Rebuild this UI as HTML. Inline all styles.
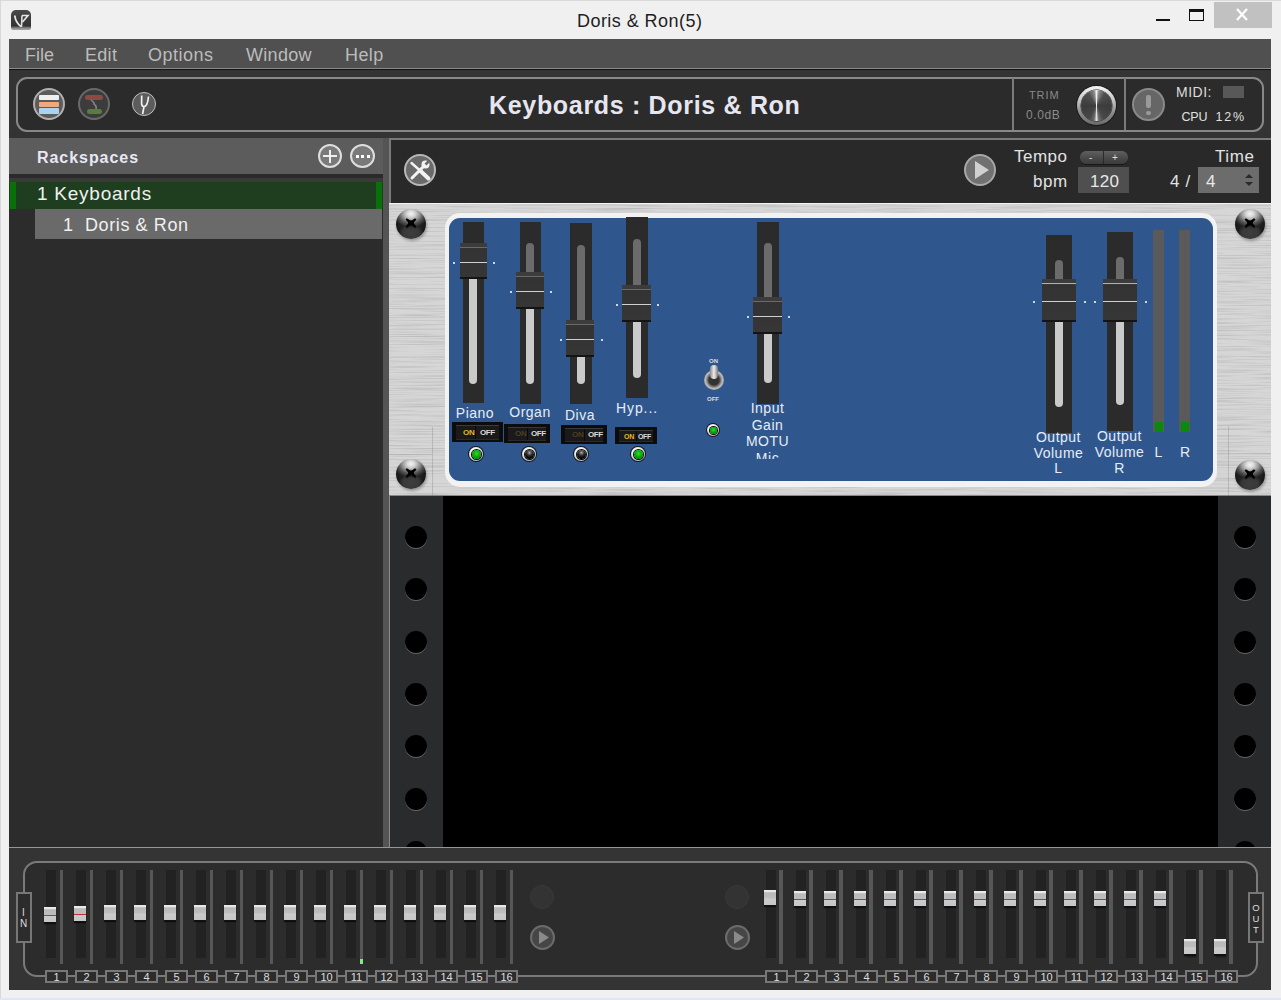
<!DOCTYPE html>
<html><head><meta charset="utf-8"><style>
*{margin:0;padding:0;box-sizing:border-box}
html,body{width:1281px;height:1000px;overflow:hidden;background:#f0f0f0;font-family:"Liberation Sans",sans-serif}
div,span,svg{position:absolute}
.t{white-space:pre;line-height:1}
</style></head><body>
<div style="left:0px;top:0px;width:1281px;height:1px;background:#dadada"></div>
<div style="left:0px;top:0px;width:1px;height:1000px;background:#d8d8d8"></div>
<span class="t" style="left:577px;top:12px;font-size:18px;color:#1e1e1e;font-weight:400;letter-spacing:0.45px">Doris &amp; Ron(5)</span>
<div style="left:11px;top:10px;width:20px;height:20px;border-radius:5px 5px 2px 2px;background:linear-gradient(#4a4a4a,#333 80%,#888 90%,#aaa);"></div>
<svg style="left:11px;top:10px" width="20" height="20" viewBox="0 0 20 20"><path d="M3.8 5.5 Q4.5 12.5 10 16.5" stroke="#e8e8e8" stroke-width="1.8" fill="none"/><path d="M11 5.5 L10.5 17" stroke="#e0e0e0" stroke-width="1.6"/><path d="M11 5.5 L17 5.5 L11.5 12" stroke="#e8e8e8" stroke-width="1.6" fill="none"/></svg>
<div style="left:1156px;top:19px;width:14px;height:2px;background:#111"></div>
<div style="left:1189px;top:9px;width:15px;height:12px;border:1px solid #111;border-top:3px solid #111"></div>
<div style="left:1214px;top:2px;width:58px;height:26px;background:#c1c1c1"></div>
<svg style="left:1235px;top:8px" width="14" height="13" viewBox="0 0 14 13"><path d="M2 1 L12 12 M12 1 L2 12" stroke="#fff" stroke-width="2.2"/></svg>
<div style="left:9px;top:39px;width:1262px;height:29px;background:#505050"></div>
<div style="left:9px;top:68px;width:1262px;height:1px;background:#8a8a8a"></div>
<div style="left:9px;top:69px;width:1262px;height:1px;background:#141414"></div>
<span class="t" style="left:25px;top:46px;font-size:18px;color:#bcbcbc;font-weight:400;letter-spacing:0px">File</span>
<span class="t" style="left:85px;top:46px;font-size:18px;color:#bcbcbc;font-weight:400;letter-spacing:0.3px">Edit</span>
<span class="t" style="left:148px;top:46px;font-size:18px;color:#bcbcbc;font-weight:400;letter-spacing:0.5px">Options</span>
<span class="t" style="left:246px;top:46px;font-size:18px;color:#bcbcbc;font-weight:400;letter-spacing:0.3px">Window</span>
<span class="t" style="left:345px;top:46px;font-size:18px;color:#bcbcbc;font-weight:400;letter-spacing:0.4px">Help</span>
<div style="left:9px;top:70px;width:1262px;height:68px;background:#343434"></div>
<div style="left:16px;top:77px;width:1248px;height:55px;border:2px solid #888;border-radius:11px;background:#2b2b2b"></div>
<div style="left:1012px;top:78px;width:2px;height:52px;background:#7a7a7a"></div>
<div style="left:1124px;top:78px;width:2px;height:52px;background:#7a7a7a"></div>
<div style="left:9px;top:132px;width:1262px;height:6px;background:#333"></div>
<span class="t" style="left:489px;top:93px;font-size:25px;color:#e6e6f0;font-weight:700;letter-spacing:0.68px">Keyboards : Doris &amp; Ron</span>
<div style="left:33px;top:88px;width:32px;height:32px;border-radius:50%;background:#5c5c5c;border:2px solid #b0b0b0"></div>
<div style="left:39px;top:95px;width:20px;height:5px;background:#eeeeee;border-radius:1px"></div>
<div style="left:39px;top:102px;width:20px;height:5px;background:#f2a878;border-radius:1px"></div>
<div style="left:39px;top:108px;width:20px;height:6px;background:#a8d4f2;border-radius:1px"></div>
<div style="left:78px;top:88px;width:32px;height:32px;border-radius:50%;background:#3c3c3c;border:2px solid #6a6a6a"></div>
<div style="left:85px;top:95px;width:18px;height:5px;background:#8c4a40;border-radius:3px"></div>
<div style="left:87px;top:109px;width:15px;height:5px;background:#5c7c3c;border-radius:3px"></div>
<svg style="left:85px;top:95px" width="20" height="20" viewBox="0 0 20 20"><path d="M6 5 Q10 8 9 9 Q12 11 11 14" stroke="#888" stroke-width="1.5" fill="none"/></svg>
<div style="left:132px;top:92px;width:24px;height:24px;border-radius:50%;background:#5c5c5c;border:1.5px solid #c0c0c0"></div>
<svg style="left:132px;top:92px" width="24" height="24" viewBox="0 0 24 24"><path d="M9.7 3.5 L9.6 11.5 Q9.8 14.6 12 14.6 Q15.6 14.4 16.5 4.5 M12 14.6 L10.6 22" stroke="#f2f2f2" stroke-width="1.7" fill="none"/></svg>
<span class="t" style="left:1029px;top:90px;font-size:11px;color:#8a8a8a;font-weight:400;letter-spacing:0.9px">TRIM</span>
<span class="t" style="left:1026px;top:109px;font-size:12px;color:#8a8a8a;font-weight:400;letter-spacing:0.6px">0.0dB</span>
<div style="left:1077px;top:86px;width:39px;height:39px;border-radius:50%;background:linear-gradient(#f4f4f4 0,#c8c8c8 35%,#8a8a8a 70%,#6a6a6a 100%);box-shadow:0 0 0 1px #1a1a1a"></div>
<div style="left:1081px;top:90px;width:31px;height:31px;border-radius:50%;background:conic-gradient(from 0deg,#f0f0f0 0deg,#888 10deg,#4e4e4e 35deg,#3c3c3c 90deg,#464646 150deg,#6a6a6a 170deg,#e0e0e0 180deg,#6a6a6a 190deg,#464646 210deg,#3c3c3c 270deg,#4e4e4e 325deg,#888 350deg,#f0f0f0 360deg);box-shadow:0 0 0 0.5px #222"></div>
<div style="left:1132px;top:88px;width:33px;height:33px;border-radius:50%;background:#666;border:2px solid #8a8a8a"></div>
<div style="left:1146px;top:95px;width:5px;height:13px;background:#9a9a9a;border-radius:2px"></div>
<div style="left:1146px;top:111px;width:5px;height:4px;background:#9a9a9a;border-radius:2px"></div>
<span class="t" style="left:1176px;top:85px;font-size:14px;color:#dcdcdc;font-weight:400;letter-spacing:0.5px">MIDI:</span>
<div style="left:1223px;top:86px;width:21px;height:12px;background:#585858"></div>
<span class="t" style="left:1181.5px;top:110.5px;font-size:12.5px;color:#e0e0e0;font-weight:400;letter-spacing:-0.2px">CPU</span>
<span class="t" style="left:1215.5px;top:110.5px;font-size:12.5px;color:#e0e0e0;font-weight:400;letter-spacing:1.8px">12%</span>
<div style="left:9px;top:138px;width:374px;height:710px;background:#2c2c2c"></div>
<div style="left:9px;top:138px;width:374px;height:36px;background:#5c5c5c"></div>
<div style="left:9px;top:174px;width:374px;height:4px;background:#2a2a2a"></div>
<div style="left:9px;top:178px;width:374px;height:4px;background:#3a3a3a"></div>
<span class="t" style="left:37px;top:150px;font-size:16px;color:#e8e8f4;font-weight:700;letter-spacing:0.95px">Rackspaces</span>
<div style="left:318px;top:144px;width:24px;height:24px;border-radius:50%;background:#7a7a7a;border:2px solid #dedede"></div>
<div style="left:329px;top:150px;width:2px;height:13px;background:#f0f0f0"></div>
<div style="left:323px;top:155px;width:14px;height:2px;background:#f0f0f0"></div>
<div style="left:350px;top:144px;width:25px;height:24px;border-radius:50%;background:#7a7a7a;border:2px solid #dedede"></div>
<div style="left:356px;top:155px;width:3px;height:3px;background:#fff"></div>
<div style="left:361px;top:155px;width:3px;height:3px;background:#fff"></div>
<div style="left:367px;top:155px;width:3px;height:3px;background:#fff"></div>
<div style="left:9px;top:182px;width:374px;height:27px;background:#1f3d1f"></div>
<div style="left:10px;top:182px;width:6px;height:27px;background:#0a700a"></div>
<div style="left:376px;top:182px;width:6px;height:27px;background:#0a700a"></div>
<span class="t" style="left:37px;top:184px;font-size:19px;color:#f0f0f0;font-weight:400;letter-spacing:0.75px">1 Keyboards</span>
<div style="left:35px;top:209px;width:347px;height:30px;background:#6a6a6a"></div>
<span class="t" style="left:63px;top:216px;font-size:18px;color:#f0f0f0;font-weight:400;">1</span>
<span class="t" style="left:85px;top:216px;font-size:18px;color:#f0f0f0;font-weight:400;letter-spacing:0.6px">Doris &amp; Ron</span>
<div style="left:383px;top:138px;width:6px;height:710px;background:#545454"></div>
<div style="left:389px;top:138px;width:882px;height:65px;background:#292929"></div>
<div style="left:389px;top:138px;width:882px;height:2px;background:#7a7a7a"></div>
<div style="left:389px;top:138px;width:2px;height:65px;background:#7a7a7a"></div>
<div style="left:404px;top:154px;width:32px;height:32px;border-radius:50%;background:#6a6a6a;border:2px solid #b8b8b8"></div>
<svg style="left:404px;top:154px" width="32" height="32" viewBox="0 0 32 32"><path d="M7.5 9 L16 16.5" stroke="#f4f4f4" stroke-width="2.4" stroke-linecap="round"/><path d="M16 16.5 L24.5 24.5" stroke="#f4f4f4" stroke-width="4" stroke-linecap="round"/><path d="M8 24 L19 13" stroke="#f4f4f4" stroke-width="3" stroke-linecap="round"/><circle cx="21.5" cy="10.5" r="4" fill="#f4f4f4"/><path d="M21.5 10.5 L25 7" stroke="#6a6a6a" stroke-width="2.6" stroke-linecap="butt"/></svg>
<div style="left:964px;top:154px;width:32px;height:32px;border-radius:50%;background:#717171;border:2px solid #a8a8a8"></div>
<svg style="left:964px;top:154px" width="32" height="32" viewBox="0 0 32 32"><path d="M11 7 L25 16 L11 25 Z" fill="#d0d0d0"/></svg>
<span class="t" style="left:1014px;top:148px;font-size:17px;color:#e2e2e2;font-weight:400;letter-spacing:0.5px">Tempo</span>
<span class="t" style="left:1033px;top:173px;font-size:17px;color:#e2e2e2;font-weight:400;letter-spacing:0.5px">bpm</span>
<div style="left:1080px;top:151px;width:48px;height:13px;background:linear-gradient(#606060,#474747 60%,#3c3c3c);border-radius:6px;box-shadow:0 1px 0 #1a1a1a"></div>
<div style="left:1103px;top:151px;width:1px;height:13px;background:#2a2a2a"></div>
<span class="t" style="left:1089px;top:153px;font-size:10px;color:#ddd;font-weight:400;">-</span>
<span class="t" style="left:1112px;top:153px;font-size:10px;color:#ddd;font-weight:400;">+</span>
<div style="left:1078px;top:167px;width:51px;height:26px;background:#4f4f4f"></div>
<span class="t" style="left:1090px;top:173px;font-size:17px;color:#e8e8e8;font-weight:400;letter-spacing:0.3px">120</span>
<span class="t" style="left:1215px;top:148px;font-size:17px;color:#e2e2e2;font-weight:400;letter-spacing:0.6px">Time</span>
<span class="t" style="left:1170px;top:173px;font-size:17px;color:#e2e2e2;font-weight:400;letter-spacing:0.7px">4 /</span>
<div style="left:1198px;top:167px;width:61px;height:26px;background:#6c6c6c"></div>
<span class="t" style="left:1206px;top:173px;font-size:17px;color:#e8e8e8;font-weight:400;">4</span>
<svg style="left:1243px;top:173px" width="12" height="14" viewBox="0 0 12 14"><path d="M2 5 L6 1 L10 5 Z M2 9 L6 13 L10 9 Z" fill="#2a2a2a"/></svg>
<div style="left:389px;top:203px;width:882px;height:293px;background:#d6d6d6"></div>
<svg style="left:389px;top:203px" width="882" height="293"><filter id="brush" x="0" y="0" width="100%" height="100%"><feTurbulence type="fractalNoise" baseFrequency="0.015 0.9" numOctaves="2" seed="3"/><feColorMatrix type="matrix" values="0 0 0 0 0  0 0 0 0 0  0 0 0 0 0  0 0 0 -1.6 0.9"/></filter><rect width="882" height="293" filter="url(#brush)" opacity="0.16"/></svg>
<div style="left:389px;top:203px;width:882px;height:1px;background:#f4f4f4"></div>
<div style="left:389px;top:495px;width:882px;height:1px;background:#888"></div>
<div style="left:445px;top:213px;width:772px;height:274px;background:#f2f2f2;border-radius:15px"></div>
<div style="left:449px;top:218px;width:764px;height:263px;background:#30578d;border-radius:11px"></div>
<div style="left:396px;top:209px;width:30px;height:30px;border-radius:50%;background:radial-gradient(ellipse 58% 46% at 50% 16%,#f4f4f4 0,#d8d8d8 22%,#9a9a9a 48%,#555 72%,rgba(40,40,40,0) 100%),radial-gradient(ellipse 42% 30% at 50% 80%,#3e3e3e 0,#383838 65%,rgba(30,30,30,0) 100%),radial-gradient(circle at 50% 45%,#2a2a2a 0,#1e1e1e 55%,#080808 100%);box-shadow:1px 2px 3px rgba(0,0,0,.3)"></div>
<svg style="left:403px;top:215px" width="16" height="16" viewBox="0 0 16 16"><path d="M2.5 4.5 L4 3.2 L8 6 L12 3.2 L13.5 4.5 L10.3 8 L13.5 11.5 L12 12.8 L8 10 L4 12.8 L2.5 11.5 L5.7 8 Z" fill="#000"/><rect x="5.2" y="5.5" width="5.6" height="5" fill="#000"/><path d="M3 13.5 Q8 9.5 13 13.5" stroke="#111" stroke-width="1" fill="none" opacity=".6"/></svg>
<div style="left:396px;top:459px;width:30px;height:30px;border-radius:50%;background:radial-gradient(ellipse 58% 46% at 50% 16%,#f4f4f4 0,#d8d8d8 22%,#9a9a9a 48%,#555 72%,rgba(40,40,40,0) 100%),radial-gradient(ellipse 42% 30% at 50% 80%,#3e3e3e 0,#383838 65%,rgba(30,30,30,0) 100%),radial-gradient(circle at 50% 45%,#2a2a2a 0,#1e1e1e 55%,#080808 100%);box-shadow:1px 2px 3px rgba(0,0,0,.3)"></div>
<svg style="left:403px;top:465px" width="16" height="16" viewBox="0 0 16 16"><path d="M2.5 4.5 L4 3.2 L8 6 L12 3.2 L13.5 4.5 L10.3 8 L13.5 11.5 L12 12.8 L8 10 L4 12.8 L2.5 11.5 L5.7 8 Z" fill="#000"/><rect x="5.2" y="5.5" width="5.6" height="5" fill="#000"/><path d="M3 13.5 Q8 9.5 13 13.5" stroke="#111" stroke-width="1" fill="none" opacity=".6"/></svg>
<div style="left:1235px;top:209px;width:30px;height:30px;border-radius:50%;background:radial-gradient(ellipse 58% 46% at 50% 16%,#f4f4f4 0,#d8d8d8 22%,#9a9a9a 48%,#555 72%,rgba(40,40,40,0) 100%),radial-gradient(ellipse 42% 30% at 50% 80%,#3e3e3e 0,#383838 65%,rgba(30,30,30,0) 100%),radial-gradient(circle at 50% 45%,#2a2a2a 0,#1e1e1e 55%,#080808 100%);box-shadow:1px 2px 3px rgba(0,0,0,.3)"></div>
<svg style="left:1242px;top:215px" width="16" height="16" viewBox="0 0 16 16"><path d="M2.5 4.5 L4 3.2 L8 6 L12 3.2 L13.5 4.5 L10.3 8 L13.5 11.5 L12 12.8 L8 10 L4 12.8 L2.5 11.5 L5.7 8 Z" fill="#000"/><rect x="5.2" y="5.5" width="5.6" height="5" fill="#000"/><path d="M3 13.5 Q8 9.5 13 13.5" stroke="#111" stroke-width="1" fill="none" opacity=".6"/></svg>
<div style="left:1235px;top:460px;width:30px;height:30px;border-radius:50%;background:radial-gradient(ellipse 58% 46% at 50% 16%,#f4f4f4 0,#d8d8d8 22%,#9a9a9a 48%,#555 72%,rgba(40,40,40,0) 100%),radial-gradient(ellipse 42% 30% at 50% 80%,#3e3e3e 0,#383838 65%,rgba(30,30,30,0) 100%),radial-gradient(circle at 50% 45%,#2a2a2a 0,#1e1e1e 55%,#080808 100%);box-shadow:1px 2px 3px rgba(0,0,0,.3)"></div>
<svg style="left:1242px;top:466px" width="16" height="16" viewBox="0 0 16 16"><path d="M2.5 4.5 L4 3.2 L8 6 L12 3.2 L13.5 4.5 L10.3 8 L13.5 11.5 L12 12.8 L8 10 L4 12.8 L2.5 11.5 L5.7 8 Z" fill="#000"/><rect x="5.2" y="5.5" width="5.6" height="5" fill="#000"/><path d="M3 13.5 Q8 9.5 13 13.5" stroke="#111" stroke-width="1" fill="none" opacity=".6"/></svg>
<div style="left:432px;top:427px;width:1px;height:69px;background:rgba(120,110,110,.28)"></div>
<div style="left:389px;top:454px;width:43px;height:1px;background:rgba(120,110,110,.22)"></div>
<div style="left:1228px;top:426px;width:1px;height:70px;background:rgba(120,110,110,.28)"></div>
<div style="left:1217px;top:453px;width:54px;height:1px;background:rgba(120,110,110,.22)"></div>
<div style="left:389px;top:496px;width:882px;height:352px;background:#000"></div>
<div style="left:389px;top:496px;width:1px;height:352px;background:#8a8a8a"></div>
<div style="left:390px;top:496px;width:53px;height:352px;background:#2a2b2d"></div>
<div style="left:1218px;top:496px;width:53px;height:352px;background:#28292b"></div>
<div style="left:405px;top:526px;width:22px;height:22px;border-radius:50%;background:#000;box-shadow:0 1px 0 #666"></div>
<div style="left:1234px;top:526px;width:22px;height:22px;border-radius:50%;background:#000;box-shadow:0 1px 0 #666"></div>
<div style="left:405px;top:578px;width:22px;height:22px;border-radius:50%;background:#000;box-shadow:0 1px 0 #666"></div>
<div style="left:1234px;top:578px;width:22px;height:22px;border-radius:50%;background:#000;box-shadow:0 1px 0 #666"></div>
<div style="left:405px;top:631px;width:22px;height:22px;border-radius:50%;background:#000;box-shadow:0 1px 0 #666"></div>
<div style="left:1234px;top:631px;width:22px;height:22px;border-radius:50%;background:#000;box-shadow:0 1px 0 #666"></div>
<div style="left:405px;top:683px;width:22px;height:22px;border-radius:50%;background:#000;box-shadow:0 1px 0 #666"></div>
<div style="left:1234px;top:683px;width:22px;height:22px;border-radius:50%;background:#000;box-shadow:0 1px 0 #666"></div>
<div style="left:405px;top:735px;width:22px;height:22px;border-radius:50%;background:#000;box-shadow:0 1px 0 #666"></div>
<div style="left:1234px;top:735px;width:22px;height:22px;border-radius:50%;background:#000;box-shadow:0 1px 0 #666"></div>
<div style="left:405px;top:788px;width:22px;height:22px;border-radius:50%;background:#000;box-shadow:0 1px 0 #666"></div>
<div style="left:1234px;top:788px;width:22px;height:22px;border-radius:50%;background:#000;box-shadow:0 1px 0 #666"></div>
<div style="left:405px;top:841px;width:22px;height:22px;border-radius:50%;background:#000;box-shadow:0 1px 0 #666"></div>
<div style="left:1234px;top:841px;width:22px;height:22px;border-radius:50%;background:#000;box-shadow:0 1px 0 #666"></div>
<div style="left:463px;top:222px;width:21px;height:181px;background:#2b2b2b"></div>
<div style="left:469px;top:243px;width:8px;height:0px;background:#6b6b6b;border-radius:4px 4px 0 0"></div>
<div style="left:469px;top:279px;width:8px;height:105px;background:#cacaca;border-radius:0 0 4px 4px"></div>
<div style="left:460px;top:243px;width:27px;height:36px;background:linear-gradient(#3c3c3c 0,#3c3c3c 13%,#333 14%,#363636 100%);border-bottom:2px solid #141414"></div>
<div style="left:460px;top:247px;width:27px;height:1px;background:#6a6a6a"></div>
<div style="left:460px;top:262px;width:27px;height:1px;background:#d0d0d0"></div>
<div style="left:453px;top:262px;width:2px;height:2px;background:#cfd8e8"></div>
<div style="left:493px;top:262px;width:2px;height:2px;background:#cfd8e8"></div>
<div style="left:520px;top:222px;width:21px;height:182px;background:#2b2b2b"></div>
<div style="left:526px;top:243px;width:8px;height:29px;background:#6b6b6b;border-radius:4px 4px 0 0"></div>
<div style="left:526px;top:309px;width:8px;height:75px;background:#cacaca;border-radius:0 0 4px 4px"></div>
<div style="left:516px;top:272px;width:28px;height:37px;background:linear-gradient(#3c3c3c 0,#3c3c3c 13%,#333 14%,#363636 100%);border-bottom:2px solid #141414"></div>
<div style="left:516px;top:276px;width:28px;height:1px;background:#6a6a6a"></div>
<div style="left:516px;top:291px;width:28px;height:1px;background:#d0d0d0"></div>
<div style="left:510px;top:291px;width:2px;height:2px;background:#cfd8e8"></div>
<div style="left:550px;top:291px;width:2px;height:2px;background:#cfd8e8"></div>
<div style="left:570px;top:223px;width:22px;height:181px;background:#2b2b2b"></div>
<div style="left:577px;top:245px;width:8px;height:75px;background:#6b6b6b;border-radius:4px 4px 0 0"></div>
<div style="left:577px;top:357px;width:8px;height:27px;background:#cacaca;border-radius:0 0 4px 4px"></div>
<div style="left:566px;top:320px;width:28px;height:37px;background:linear-gradient(#3c3c3c 0,#3c3c3c 13%,#333 14%,#363636 100%);border-bottom:2px solid #141414"></div>
<div style="left:566px;top:324px;width:28px;height:1px;background:#6a6a6a"></div>
<div style="left:566px;top:339px;width:28px;height:1px;background:#d0d0d0"></div>
<div style="left:560px;top:339px;width:2px;height:2px;background:#cfd8e8"></div>
<div style="left:601px;top:339px;width:2px;height:2px;background:#cfd8e8"></div>
<div style="left:626px;top:217px;width:22px;height:181px;background:#2b2b2b"></div>
<div style="left:633px;top:239px;width:8px;height:46px;background:#6b6b6b;border-radius:4px 4px 0 0"></div>
<div style="left:633px;top:322px;width:8px;height:56px;background:#cacaca;border-radius:0 0 4px 4px"></div>
<div style="left:622px;top:285px;width:29px;height:37px;background:linear-gradient(#3c3c3c 0,#3c3c3c 13%,#333 14%,#363636 100%);border-bottom:2px solid #141414"></div>
<div style="left:622px;top:289px;width:29px;height:1px;background:#6a6a6a"></div>
<div style="left:622px;top:304px;width:29px;height:1px;background:#d0d0d0"></div>
<div style="left:616px;top:304px;width:2px;height:2px;background:#cfd8e8"></div>
<div style="left:657px;top:304px;width:2px;height:2px;background:#cfd8e8"></div>
<div style="left:757px;top:222px;width:22px;height:182px;background:#2b2b2b"></div>
<div style="left:764px;top:243px;width:8px;height:54px;background:#6b6b6b;border-radius:4px 4px 0 0"></div>
<div style="left:764px;top:334px;width:8px;height:49px;background:#cacaca;border-radius:0 0 4px 4px"></div>
<div style="left:753px;top:297px;width:29px;height:37px;background:linear-gradient(#3c3c3c 0,#3c3c3c 13%,#333 14%,#363636 100%);border-bottom:2px solid #141414"></div>
<div style="left:753px;top:301px;width:29px;height:1px;background:#6a6a6a"></div>
<div style="left:753px;top:316px;width:29px;height:1px;background:#d0d0d0"></div>
<div style="left:747px;top:316px;width:2px;height:2px;background:#cfd8e8"></div>
<div style="left:788px;top:316px;width:2px;height:2px;background:#cfd8e8"></div>
<div style="left:1046px;top:235px;width:26px;height:198px;background:#2b2b2b"></div>
<div style="left:1055px;top:260px;width:8px;height:19px;background:#6b6b6b;border-radius:4px 4px 0 0"></div>
<div style="left:1055px;top:322px;width:8px;height:85px;background:#cacaca;border-radius:0 0 4px 4px"></div>
<div style="left:1042px;top:279px;width:34px;height:43px;background:linear-gradient(#3c3c3c 0,#3c3c3c 13%,#333 14%,#363636 100%);border-bottom:2px solid #141414"></div>
<div style="left:1042px;top:283px;width:34px;height:1px;background:#b0b0b0"></div>
<div style="left:1042px;top:301px;width:34px;height:1px;background:#d0d0d0"></div>
<div style="left:1033px;top:301px;width:2px;height:2px;background:#cfd8e8"></div>
<div style="left:1084px;top:301px;width:2px;height:2px;background:#cfd8e8"></div>
<div style="left:1107px;top:232px;width:26px;height:199px;background:#2b2b2b"></div>
<div style="left:1116px;top:257px;width:8px;height:22px;background:#6b6b6b;border-radius:4px 4px 0 0"></div>
<div style="left:1116px;top:322px;width:8px;height:83px;background:#cacaca;border-radius:0 0 4px 4px"></div>
<div style="left:1103px;top:279px;width:34px;height:43px;background:linear-gradient(#3c3c3c 0,#3c3c3c 13%,#333 14%,#363636 100%);border-bottom:2px solid #141414"></div>
<div style="left:1103px;top:283px;width:34px;height:1px;background:#b0b0b0"></div>
<div style="left:1103px;top:301px;width:34px;height:1px;background:#d0d0d0"></div>
<div style="left:1094px;top:301px;width:2px;height:2px;background:#cfd8e8"></div>
<div style="left:1145px;top:301px;width:2px;height:2px;background:#cfd8e8"></div>
<span class="t" style="left:375.0px;top:406px;width:200px;text-align:center;font-size:14px;color:#e6ecf6;font-weight:400;letter-spacing:0.5px">Piano</span>
<span class="t" style="left:430.0px;top:405px;width:200px;text-align:center;font-size:14px;color:#e6ecf6;font-weight:400;letter-spacing:0.5px">Organ</span>
<span class="t" style="left:480.0px;top:408px;width:200px;text-align:center;font-size:14px;color:#e6ecf6;font-weight:400;letter-spacing:0.5px">Diva</span>
<span class="t" style="left:537.0px;top:400.5px;width:200px;text-align:center;font-size:14px;color:#e6ecf6;font-weight:400;letter-spacing:0.9px">Hyp...</span>
<div style="left:727px;top:400px;width:81px;height:59px;overflow:hidden"><div style="left:0;top:0;width:81px;text-align:center;font-size:14px;line-height:16.5px;color:#e6ecf6;letter-spacing:0.5px">Input<br>Gain<br>MOTU<br>Mic</div></div>
<div style="left:1018px;top:430px;width:81px;height:50px"><div style="left:0;top:0;width:81px;text-align:center;font-size:14px;line-height:15.5px;color:#e6ecf6;letter-spacing:0.5px">Output<br>Volume<br>L</div></div>
<div style="left:1079px;top:428px;width:81px;height:50px"><div style="left:0;top:0;width:81px;text-align:center;font-size:14px;line-height:16px;color:#e6ecf6;letter-spacing:0.5px">Output<br>Volume<br>R</div></div>
<div style="left:757px;top:399px;width:22px;height:5px;background:#2b2b2b"></div>
<span class="t" style="left:1058.5px;top:445px;width:200px;text-align:center;font-size:14px;color:#e6ecf6;font-weight:400;">L</span>
<span class="t" style="left:1085.0px;top:445px;width:200px;text-align:center;font-size:14px;color:#e6ecf6;font-weight:400;">R</span>
<div style="left:1153px;top:230px;width:11px;height:202px;background:#5a5a5a"></div>
<div style="left:1179px;top:230px;width:11px;height:202px;background:#5a5a5a"></div>
<div style="left:1155px;top:422px;width:8px;height:10px;background:#0a8a0a"></div>
<div style="left:1181px;top:422px;width:8px;height:10px;background:#0a8a0a"></div>
<div style="left:452px;top:422px;width:51px;height:20px;background:#0c0c0c"></div>
<div style="left:456px;top:425px;width:43px;height:15px;background:#1a1a1a;border-top:1px solid #3a3a3a;border-bottom:1px solid #2a2a2a"></div>
<div style="left:475px;top:426px;width:1px;height:13px;background:#0a0a0a"></div>
<span class="t" style="left:463px;top:429px;font-size:8px;color:#e0b830;font-weight:700;letter-spacing:-0.2px">ON</span>
<span class="t" style="left:480px;top:429px;font-size:8px;color:#d8d8d8;font-weight:700;letter-spacing:-0.4px">OFF</span>
<div style="left:504px;top:424px;width:46px;height:19px;background:#0c0c0c"></div>
<div style="left:508px;top:427px;width:38px;height:14px;background:#1a1a1a;border-top:1px solid #3a3a3a;border-bottom:1px solid #2a2a2a"></div>
<div style="left:527px;top:428px;width:1px;height:12px;background:#0a0a0a"></div>
<span class="t" style="left:515px;top:430px;font-size:8px;color:#4a4020;font-weight:700;letter-spacing:-0.2px">ON</span>
<span class="t" style="left:531px;top:430px;font-size:8px;color:#d8d8d8;font-weight:700;letter-spacing:-0.4px">OFF</span>
<div style="left:561px;top:425px;width:46px;height:19px;background:#0c0c0c"></div>
<div style="left:565px;top:428px;width:38px;height:14px;background:#1a1a1a;border-top:1px solid #3a3a3a;border-bottom:1px solid #2a2a2a"></div>
<div style="left:584px;top:429px;width:1px;height:12px;background:#0a0a0a"></div>
<span class="t" style="left:572px;top:431px;font-size:8px;color:#4a4020;font-weight:700;letter-spacing:-0.2px">ON</span>
<span class="t" style="left:588px;top:431px;font-size:8px;color:#d8d8d8;font-weight:700;letter-spacing:-0.4px">OFF</span>
<div style="left:615px;top:427px;width:42px;height:17px;background:#0c0c0c"></div>
<div style="left:619px;top:430px;width:34px;height:12px;background:#1a1a1a;border-top:1px solid #3a3a3a;border-bottom:1px solid #2a2a2a"></div>
<div style="left:636px;top:431px;width:1px;height:10px;background:#0a0a0a"></div>
<span class="t" style="left:624px;top:433px;font-size:7px;color:#e0b830;font-weight:700;letter-spacing:-0.2px">ON</span>
<span class="t" style="left:638px;top:433px;font-size:7px;color:#d8d8d8;font-weight:700;letter-spacing:-0.4px">OFF</span>
<div style="left:469px;top:447px;width:14px;height:14px;border-radius:50%;background:radial-gradient(circle at 45% 40%,#f4f4f4 40%,#aaa 80%,#666 100%);box-shadow:0 0 0 1px #161616"></div>
<div style="left:471.5px;top:449.5px;width:9px;height:9px;border-radius:50%;background:radial-gradient(circle at 50% 40%,#4c4 0,#0b0 40%,#060 90%);box-shadow:0 0 0 1px #0a0a0a"></div>
<div style="left:522px;top:447px;width:14px;height:14px;border-radius:50%;background:radial-gradient(circle at 45% 40%,#f4f4f4 40%,#aaa 80%,#666 100%);box-shadow:0 0 0 1px #161616"></div>
<div style="left:524.5px;top:449.5px;width:9px;height:9px;border-radius:50%;background:radial-gradient(circle at 50% 30%,#aaa 0,#333 35%,#000 70%);box-shadow:0 0 0 1px #0a0a0a"></div>
<div style="left:574px;top:447px;width:14px;height:14px;border-radius:50%;background:radial-gradient(circle at 45% 40%,#f4f4f4 40%,#aaa 80%,#666 100%);box-shadow:0 0 0 1px #161616"></div>
<div style="left:576.5px;top:449.5px;width:9px;height:9px;border-radius:50%;background:radial-gradient(circle at 50% 30%,#aaa 0,#333 35%,#000 70%);box-shadow:0 0 0 1px #0a0a0a"></div>
<div style="left:631px;top:447px;width:14px;height:14px;border-radius:50%;background:radial-gradient(circle at 45% 40%,#f4f4f4 40%,#aaa 80%,#666 100%);box-shadow:0 0 0 1px #161616"></div>
<div style="left:633.5px;top:449.5px;width:9px;height:9px;border-radius:50%;background:radial-gradient(circle at 50% 40%,#4c4 0,#0b0 40%,#060 90%);box-shadow:0 0 0 1px #0a0a0a"></div>
<div style="left:707px;top:424px;width:12px;height:12px;border-radius:50%;background:radial-gradient(circle at 45% 40%,#f4f4f4 40%,#aaa 80%,#666 100%);box-shadow:0 0 0 1px #161616"></div>
<div style="left:709.5px;top:426.5px;width:7px;height:7px;border-radius:50%;background:radial-gradient(circle at 50% 40%,#4c4 0,#0b0 40%,#060 90%);box-shadow:0 0 0 1px #0a0a0a"></div>
<span class="t" style="left:709px;top:358px;font-size:6px;color:#ddd;font-weight:700;">ON</span>
<span class="t" style="left:707px;top:396px;font-size:6px;color:#ddd;font-weight:700;">OFF</span>
<div style="left:704px;top:370px;width:20px;height:20px;border-radius:50%;background:radial-gradient(circle,#333 35%,#bbb 60%,#666 100%)"></div>
<div style="left:710px;top:365px;width:8px;height:14px;border-radius:4px;background:linear-gradient(90deg,#888,#eee,#777)"></div>
<div style="left:9px;top:848px;width:1262px;height:142px;background:#343434"></div>
<div style="left:9px;top:847px;width:1262px;height:1px;background:#969696"></div>
<div style="left:23px;top:861px;width:1235px;height:116px;border:2px solid #7a7a7a;border-radius:14px;background:#2c2c2c"></div>
<div style="left:16px;top:892px;width:16px;height:51px;background:#2c2c2c;border:2px solid #777"></div>
<div style="left:16px;top:907px;width:15px;text-align:center;font-size:10px;line-height:11px;color:#ddd">I<br>N</div>
<div style="left:1248px;top:892px;width:16px;height:51px;background:#2c2c2c;border:2px solid #777"></div>
<div style="left:1248.5px;top:901.5px;width:15px;text-align:center;font-size:9.5px;line-height:11px;color:#ddd">O<br>U<br>T</div>
<div style="left:46px;top:870px;width:10px;height:88px;background:#222"></div>
<div style="left:60px;top:870px;width:3px;height:94px;background:#575757"></div>
<div style="left:44px;top:907px;width:12px;height:16px;background:linear-gradient(#ececec 0,#e6e6e6 12%,#bababa 18%,#bdbdbd 50%,#cbcbcb 60%,#c6c6c6 100%);border-bottom:1px solid #111;box-shadow:0 1px 1px rgba(0,0,0,.6)"></div>
<div style="left:44px;top:915px;width:12px;height:1px;background:#c03030"></div>
<div style="left:45px;top:970px;width:23px;height:13px;background:#2c2c2c;border:2px solid #777"></div>
<span class="t" style="left:41.5px;top:972px;width:30px;text-align:center;font-size:11px;color:#dddddd;font-weight:400;">1</span>
<div style="left:76px;top:870px;width:10px;height:88px;background:#222"></div>
<div style="left:90px;top:870px;width:3px;height:94px;background:#575757"></div>
<div style="left:74px;top:906px;width:12px;height:16px;background:linear-gradient(#ececec 0,#e6e6e6 12%,#bababa 18%,#bdbdbd 50%,#cbcbcb 60%,#c6c6c6 100%);border-bottom:1px solid #111;box-shadow:0 1px 1px rgba(0,0,0,.6)"></div>
<div style="left:74px;top:914px;width:12px;height:1px;background:#c03030"></div>
<div style="left:75px;top:970px;width:23px;height:13px;background:#2c2c2c;border:2px solid #777"></div>
<span class="t" style="left:71.5px;top:972px;width:30px;text-align:center;font-size:11px;color:#dddddd;font-weight:400;">2</span>
<div style="left:106px;top:870px;width:10px;height:88px;background:#222"></div>
<div style="left:120px;top:870px;width:3px;height:94px;background:#575757"></div>
<div style="left:104px;top:905px;width:12px;height:16px;background:linear-gradient(#ececec 0,#e6e6e6 12%,#bababa 18%,#bdbdbd 50%,#cbcbcb 60%,#c6c6c6 100%);border-bottom:1px solid #111;box-shadow:0 1px 1px rgba(0,0,0,.6)"></div>
<div style="left:105px;top:970px;width:23px;height:13px;background:#2c2c2c;border:2px solid #777"></div>
<span class="t" style="left:101.5px;top:972px;width:30px;text-align:center;font-size:11px;color:#dddddd;font-weight:400;">3</span>
<div style="left:136px;top:870px;width:10px;height:88px;background:#222"></div>
<div style="left:150px;top:870px;width:3px;height:94px;background:#575757"></div>
<div style="left:134px;top:905px;width:12px;height:16px;background:linear-gradient(#ececec 0,#e6e6e6 12%,#bababa 18%,#bdbdbd 50%,#cbcbcb 60%,#c6c6c6 100%);border-bottom:1px solid #111;box-shadow:0 1px 1px rgba(0,0,0,.6)"></div>
<div style="left:135px;top:970px;width:23px;height:13px;background:#2c2c2c;border:2px solid #777"></div>
<span class="t" style="left:131.5px;top:972px;width:30px;text-align:center;font-size:11px;color:#dddddd;font-weight:400;">4</span>
<div style="left:166px;top:870px;width:10px;height:88px;background:#222"></div>
<div style="left:180px;top:870px;width:3px;height:94px;background:#575757"></div>
<div style="left:164px;top:905px;width:12px;height:16px;background:linear-gradient(#ececec 0,#e6e6e6 12%,#bababa 18%,#bdbdbd 50%,#cbcbcb 60%,#c6c6c6 100%);border-bottom:1px solid #111;box-shadow:0 1px 1px rgba(0,0,0,.6)"></div>
<div style="left:165px;top:970px;width:23px;height:13px;background:#2c2c2c;border:2px solid #777"></div>
<span class="t" style="left:161.5px;top:972px;width:30px;text-align:center;font-size:11px;color:#dddddd;font-weight:400;">5</span>
<div style="left:196px;top:870px;width:10px;height:88px;background:#222"></div>
<div style="left:210px;top:870px;width:3px;height:94px;background:#575757"></div>
<div style="left:194px;top:905px;width:12px;height:16px;background:linear-gradient(#ececec 0,#e6e6e6 12%,#bababa 18%,#bdbdbd 50%,#cbcbcb 60%,#c6c6c6 100%);border-bottom:1px solid #111;box-shadow:0 1px 1px rgba(0,0,0,.6)"></div>
<div style="left:195px;top:970px;width:23px;height:13px;background:#2c2c2c;border:2px solid #777"></div>
<span class="t" style="left:191.5px;top:972px;width:30px;text-align:center;font-size:11px;color:#dddddd;font-weight:400;">6</span>
<div style="left:226px;top:870px;width:10px;height:88px;background:#222"></div>
<div style="left:240px;top:870px;width:3px;height:94px;background:#575757"></div>
<div style="left:224px;top:905px;width:12px;height:16px;background:linear-gradient(#ececec 0,#e6e6e6 12%,#bababa 18%,#bdbdbd 50%,#cbcbcb 60%,#c6c6c6 100%);border-bottom:1px solid #111;box-shadow:0 1px 1px rgba(0,0,0,.6)"></div>
<div style="left:225px;top:970px;width:23px;height:13px;background:#2c2c2c;border:2px solid #777"></div>
<span class="t" style="left:221.5px;top:972px;width:30px;text-align:center;font-size:11px;color:#dddddd;font-weight:400;">7</span>
<div style="left:256px;top:870px;width:10px;height:88px;background:#222"></div>
<div style="left:270px;top:870px;width:3px;height:94px;background:#575757"></div>
<div style="left:254px;top:905px;width:12px;height:16px;background:linear-gradient(#ececec 0,#e6e6e6 12%,#bababa 18%,#bdbdbd 50%,#cbcbcb 60%,#c6c6c6 100%);border-bottom:1px solid #111;box-shadow:0 1px 1px rgba(0,0,0,.6)"></div>
<div style="left:255px;top:970px;width:23px;height:13px;background:#2c2c2c;border:2px solid #777"></div>
<span class="t" style="left:251.5px;top:972px;width:30px;text-align:center;font-size:11px;color:#dddddd;font-weight:400;">8</span>
<div style="left:286px;top:870px;width:10px;height:88px;background:#222"></div>
<div style="left:300px;top:870px;width:3px;height:94px;background:#575757"></div>
<div style="left:284px;top:905px;width:12px;height:16px;background:linear-gradient(#ececec 0,#e6e6e6 12%,#bababa 18%,#bdbdbd 50%,#cbcbcb 60%,#c6c6c6 100%);border-bottom:1px solid #111;box-shadow:0 1px 1px rgba(0,0,0,.6)"></div>
<div style="left:285px;top:970px;width:23px;height:13px;background:#2c2c2c;border:2px solid #777"></div>
<span class="t" style="left:281.5px;top:972px;width:30px;text-align:center;font-size:11px;color:#dddddd;font-weight:400;">9</span>
<div style="left:316px;top:870px;width:10px;height:88px;background:#222"></div>
<div style="left:330px;top:870px;width:3px;height:94px;background:#575757"></div>
<div style="left:314px;top:905px;width:12px;height:16px;background:linear-gradient(#ececec 0,#e6e6e6 12%,#bababa 18%,#bdbdbd 50%,#cbcbcb 60%,#c6c6c6 100%);border-bottom:1px solid #111;box-shadow:0 1px 1px rgba(0,0,0,.6)"></div>
<div style="left:315px;top:970px;width:23px;height:13px;background:#2c2c2c;border:2px solid #777"></div>
<span class="t" style="left:311.5px;top:972px;width:30px;text-align:center;font-size:11px;color:#dddddd;font-weight:400;">10</span>
<div style="left:346px;top:870px;width:10px;height:88px;background:#222"></div>
<div style="left:360px;top:870px;width:3px;height:94px;background:#575757"></div>
<div style="left:344px;top:905px;width:12px;height:16px;background:linear-gradient(#ececec 0,#e6e6e6 12%,#bababa 18%,#bdbdbd 50%,#cbcbcb 60%,#c6c6c6 100%);border-bottom:1px solid #111;box-shadow:0 1px 1px rgba(0,0,0,.6)"></div>
<div style="left:345px;top:970px;width:23px;height:13px;background:#2c2c2c;border:2px solid #777"></div>
<span class="t" style="left:341.5px;top:972px;width:30px;text-align:center;font-size:11px;color:#dddddd;font-weight:400;">11</span>
<div style="left:376px;top:870px;width:10px;height:88px;background:#222"></div>
<div style="left:390px;top:870px;width:3px;height:94px;background:#575757"></div>
<div style="left:374px;top:905px;width:12px;height:16px;background:linear-gradient(#ececec 0,#e6e6e6 12%,#bababa 18%,#bdbdbd 50%,#cbcbcb 60%,#c6c6c6 100%);border-bottom:1px solid #111;box-shadow:0 1px 1px rgba(0,0,0,.6)"></div>
<div style="left:375px;top:970px;width:23px;height:13px;background:#2c2c2c;border:2px solid #777"></div>
<span class="t" style="left:371.5px;top:972px;width:30px;text-align:center;font-size:11px;color:#dddddd;font-weight:400;">12</span>
<div style="left:406px;top:870px;width:10px;height:88px;background:#222"></div>
<div style="left:420px;top:870px;width:3px;height:94px;background:#575757"></div>
<div style="left:404px;top:905px;width:12px;height:16px;background:linear-gradient(#ececec 0,#e6e6e6 12%,#bababa 18%,#bdbdbd 50%,#cbcbcb 60%,#c6c6c6 100%);border-bottom:1px solid #111;box-shadow:0 1px 1px rgba(0,0,0,.6)"></div>
<div style="left:405px;top:970px;width:23px;height:13px;background:#2c2c2c;border:2px solid #777"></div>
<span class="t" style="left:401.5px;top:972px;width:30px;text-align:center;font-size:11px;color:#dddddd;font-weight:400;">13</span>
<div style="left:436px;top:870px;width:10px;height:88px;background:#222"></div>
<div style="left:450px;top:870px;width:3px;height:94px;background:#575757"></div>
<div style="left:434px;top:905px;width:12px;height:16px;background:linear-gradient(#ececec 0,#e6e6e6 12%,#bababa 18%,#bdbdbd 50%,#cbcbcb 60%,#c6c6c6 100%);border-bottom:1px solid #111;box-shadow:0 1px 1px rgba(0,0,0,.6)"></div>
<div style="left:435px;top:970px;width:23px;height:13px;background:#2c2c2c;border:2px solid #777"></div>
<span class="t" style="left:431.5px;top:972px;width:30px;text-align:center;font-size:11px;color:#dddddd;font-weight:400;">14</span>
<div style="left:466px;top:870px;width:10px;height:88px;background:#222"></div>
<div style="left:480px;top:870px;width:3px;height:94px;background:#575757"></div>
<div style="left:464px;top:905px;width:12px;height:16px;background:linear-gradient(#ececec 0,#e6e6e6 12%,#bababa 18%,#bdbdbd 50%,#cbcbcb 60%,#c6c6c6 100%);border-bottom:1px solid #111;box-shadow:0 1px 1px rgba(0,0,0,.6)"></div>
<div style="left:465px;top:970px;width:23px;height:13px;background:#2c2c2c;border:2px solid #777"></div>
<span class="t" style="left:461.5px;top:972px;width:30px;text-align:center;font-size:11px;color:#dddddd;font-weight:400;">15</span>
<div style="left:496px;top:870px;width:10px;height:88px;background:#222"></div>
<div style="left:510px;top:870px;width:3px;height:94px;background:#575757"></div>
<div style="left:494px;top:905px;width:12px;height:16px;background:linear-gradient(#ececec 0,#e6e6e6 12%,#bababa 18%,#bdbdbd 50%,#cbcbcb 60%,#c6c6c6 100%);border-bottom:1px solid #111;box-shadow:0 1px 1px rgba(0,0,0,.6)"></div>
<div style="left:495px;top:970px;width:23px;height:13px;background:#2c2c2c;border:2px solid #777"></div>
<span class="t" style="left:491.5px;top:972px;width:30px;text-align:center;font-size:11px;color:#dddddd;font-weight:400;">16</span>
<div style="left:360px;top:959px;width:3px;height:5px;background:#7cf07c"></div>
<div style="left:766px;top:870px;width:10px;height:88px;background:#222"></div>
<div style="left:779px;top:870px;width:4px;height:94px;background:#575757"></div>
<div style="left:764px;top:890px;width:12px;height:16px;background:linear-gradient(#ececec 0,#e6e6e6 12%,#bababa 18%,#bdbdbd 50%,#cbcbcb 60%,#c6c6c6 100%);border-bottom:1px solid #111;box-shadow:0 1px 1px rgba(0,0,0,.6)"></div>
<div style="left:765px;top:970px;width:23px;height:13px;background:#2c2c2c;border:2px solid #777"></div>
<span class="t" style="left:761.5px;top:972px;width:30px;text-align:center;font-size:11px;color:#dddddd;font-weight:400;">1</span>
<div style="left:796px;top:870px;width:10px;height:88px;background:#222"></div>
<div style="left:809px;top:870px;width:4px;height:94px;background:#575757"></div>
<div style="left:794px;top:891px;width:12px;height:16px;background:linear-gradient(#ececec 0,#e6e6e6 12%,#bababa 18%,#bdbdbd 50%,#cbcbcb 60%,#c6c6c6 100%);border-bottom:1px solid #111;box-shadow:0 1px 1px rgba(0,0,0,.6)"></div>
<div style="left:794px;top:899px;width:12px;height:1px;background:#c03030"></div>
<div style="left:795px;top:970px;width:23px;height:13px;background:#2c2c2c;border:2px solid #777"></div>
<span class="t" style="left:791.5px;top:972px;width:30px;text-align:center;font-size:11px;color:#dddddd;font-weight:400;">2</span>
<div style="left:826px;top:870px;width:10px;height:88px;background:#222"></div>
<div style="left:839px;top:870px;width:4px;height:94px;background:#575757"></div>
<div style="left:824px;top:891px;width:12px;height:16px;background:linear-gradient(#ececec 0,#e6e6e6 12%,#bababa 18%,#bdbdbd 50%,#cbcbcb 60%,#c6c6c6 100%);border-bottom:1px solid #111;box-shadow:0 1px 1px rgba(0,0,0,.6)"></div>
<div style="left:824px;top:899px;width:12px;height:1px;background:#c03030"></div>
<div style="left:825px;top:970px;width:23px;height:13px;background:#2c2c2c;border:2px solid #777"></div>
<span class="t" style="left:821.5px;top:972px;width:30px;text-align:center;font-size:11px;color:#dddddd;font-weight:400;">3</span>
<div style="left:856px;top:870px;width:10px;height:88px;background:#222"></div>
<div style="left:869px;top:870px;width:4px;height:94px;background:#575757"></div>
<div style="left:854px;top:891px;width:12px;height:16px;background:linear-gradient(#ececec 0,#e6e6e6 12%,#bababa 18%,#bdbdbd 50%,#cbcbcb 60%,#c6c6c6 100%);border-bottom:1px solid #111;box-shadow:0 1px 1px rgba(0,0,0,.6)"></div>
<div style="left:854px;top:899px;width:12px;height:1px;background:#c03030"></div>
<div style="left:855px;top:970px;width:23px;height:13px;background:#2c2c2c;border:2px solid #777"></div>
<span class="t" style="left:851.5px;top:972px;width:30px;text-align:center;font-size:11px;color:#dddddd;font-weight:400;">4</span>
<div style="left:886px;top:870px;width:10px;height:88px;background:#222"></div>
<div style="left:899px;top:870px;width:4px;height:94px;background:#575757"></div>
<div style="left:884px;top:891px;width:12px;height:16px;background:linear-gradient(#ececec 0,#e6e6e6 12%,#bababa 18%,#bdbdbd 50%,#cbcbcb 60%,#c6c6c6 100%);border-bottom:1px solid #111;box-shadow:0 1px 1px rgba(0,0,0,.6)"></div>
<div style="left:884px;top:899px;width:12px;height:1px;background:#c03030"></div>
<div style="left:885px;top:970px;width:23px;height:13px;background:#2c2c2c;border:2px solid #777"></div>
<span class="t" style="left:881.5px;top:972px;width:30px;text-align:center;font-size:11px;color:#dddddd;font-weight:400;">5</span>
<div style="left:916px;top:870px;width:10px;height:88px;background:#222"></div>
<div style="left:929px;top:870px;width:4px;height:94px;background:#575757"></div>
<div style="left:914px;top:891px;width:12px;height:16px;background:linear-gradient(#ececec 0,#e6e6e6 12%,#bababa 18%,#bdbdbd 50%,#cbcbcb 60%,#c6c6c6 100%);border-bottom:1px solid #111;box-shadow:0 1px 1px rgba(0,0,0,.6)"></div>
<div style="left:914px;top:899px;width:12px;height:1px;background:#c03030"></div>
<div style="left:915px;top:970px;width:23px;height:13px;background:#2c2c2c;border:2px solid #777"></div>
<span class="t" style="left:911.5px;top:972px;width:30px;text-align:center;font-size:11px;color:#dddddd;font-weight:400;">6</span>
<div style="left:946px;top:870px;width:10px;height:88px;background:#222"></div>
<div style="left:959px;top:870px;width:4px;height:94px;background:#575757"></div>
<div style="left:944px;top:891px;width:12px;height:16px;background:linear-gradient(#ececec 0,#e6e6e6 12%,#bababa 18%,#bdbdbd 50%,#cbcbcb 60%,#c6c6c6 100%);border-bottom:1px solid #111;box-shadow:0 1px 1px rgba(0,0,0,.6)"></div>
<div style="left:944px;top:899px;width:12px;height:1px;background:#c03030"></div>
<div style="left:945px;top:970px;width:23px;height:13px;background:#2c2c2c;border:2px solid #777"></div>
<span class="t" style="left:941.5px;top:972px;width:30px;text-align:center;font-size:11px;color:#dddddd;font-weight:400;">7</span>
<div style="left:976px;top:870px;width:10px;height:88px;background:#222"></div>
<div style="left:989px;top:870px;width:4px;height:94px;background:#575757"></div>
<div style="left:974px;top:891px;width:12px;height:16px;background:linear-gradient(#ececec 0,#e6e6e6 12%,#bababa 18%,#bdbdbd 50%,#cbcbcb 60%,#c6c6c6 100%);border-bottom:1px solid #111;box-shadow:0 1px 1px rgba(0,0,0,.6)"></div>
<div style="left:974px;top:899px;width:12px;height:1px;background:#c03030"></div>
<div style="left:975px;top:970px;width:23px;height:13px;background:#2c2c2c;border:2px solid #777"></div>
<span class="t" style="left:971.5px;top:972px;width:30px;text-align:center;font-size:11px;color:#dddddd;font-weight:400;">8</span>
<div style="left:1006px;top:870px;width:10px;height:88px;background:#222"></div>
<div style="left:1019px;top:870px;width:4px;height:94px;background:#575757"></div>
<div style="left:1004px;top:891px;width:12px;height:16px;background:linear-gradient(#ececec 0,#e6e6e6 12%,#bababa 18%,#bdbdbd 50%,#cbcbcb 60%,#c6c6c6 100%);border-bottom:1px solid #111;box-shadow:0 1px 1px rgba(0,0,0,.6)"></div>
<div style="left:1004px;top:899px;width:12px;height:1px;background:#c03030"></div>
<div style="left:1005px;top:970px;width:23px;height:13px;background:#2c2c2c;border:2px solid #777"></div>
<span class="t" style="left:1001.5px;top:972px;width:30px;text-align:center;font-size:11px;color:#dddddd;font-weight:400;">9</span>
<div style="left:1036px;top:870px;width:10px;height:88px;background:#222"></div>
<div style="left:1049px;top:870px;width:4px;height:94px;background:#575757"></div>
<div style="left:1034px;top:891px;width:12px;height:16px;background:linear-gradient(#ececec 0,#e6e6e6 12%,#bababa 18%,#bdbdbd 50%,#cbcbcb 60%,#c6c6c6 100%);border-bottom:1px solid #111;box-shadow:0 1px 1px rgba(0,0,0,.6)"></div>
<div style="left:1034px;top:899px;width:12px;height:1px;background:#c03030"></div>
<div style="left:1035px;top:970px;width:23px;height:13px;background:#2c2c2c;border:2px solid #777"></div>
<span class="t" style="left:1031.5px;top:972px;width:30px;text-align:center;font-size:11px;color:#dddddd;font-weight:400;">10</span>
<div style="left:1066px;top:870px;width:10px;height:88px;background:#222"></div>
<div style="left:1079px;top:870px;width:4px;height:94px;background:#575757"></div>
<div style="left:1064px;top:891px;width:12px;height:16px;background:linear-gradient(#ececec 0,#e6e6e6 12%,#bababa 18%,#bdbdbd 50%,#cbcbcb 60%,#c6c6c6 100%);border-bottom:1px solid #111;box-shadow:0 1px 1px rgba(0,0,0,.6)"></div>
<div style="left:1064px;top:899px;width:12px;height:1px;background:#c03030"></div>
<div style="left:1065px;top:970px;width:23px;height:13px;background:#2c2c2c;border:2px solid #777"></div>
<span class="t" style="left:1061.5px;top:972px;width:30px;text-align:center;font-size:11px;color:#dddddd;font-weight:400;">11</span>
<div style="left:1096px;top:870px;width:10px;height:88px;background:#222"></div>
<div style="left:1109px;top:870px;width:4px;height:94px;background:#575757"></div>
<div style="left:1094px;top:891px;width:12px;height:16px;background:linear-gradient(#ececec 0,#e6e6e6 12%,#bababa 18%,#bdbdbd 50%,#cbcbcb 60%,#c6c6c6 100%);border-bottom:1px solid #111;box-shadow:0 1px 1px rgba(0,0,0,.6)"></div>
<div style="left:1094px;top:899px;width:12px;height:1px;background:#c03030"></div>
<div style="left:1095px;top:970px;width:23px;height:13px;background:#2c2c2c;border:2px solid #777"></div>
<span class="t" style="left:1091.5px;top:972px;width:30px;text-align:center;font-size:11px;color:#dddddd;font-weight:400;">12</span>
<div style="left:1126px;top:870px;width:10px;height:88px;background:#222"></div>
<div style="left:1139px;top:870px;width:4px;height:94px;background:#575757"></div>
<div style="left:1124px;top:891px;width:12px;height:16px;background:linear-gradient(#ececec 0,#e6e6e6 12%,#bababa 18%,#bdbdbd 50%,#cbcbcb 60%,#c6c6c6 100%);border-bottom:1px solid #111;box-shadow:0 1px 1px rgba(0,0,0,.6)"></div>
<div style="left:1124px;top:899px;width:12px;height:1px;background:#c03030"></div>
<div style="left:1125px;top:970px;width:23px;height:13px;background:#2c2c2c;border:2px solid #777"></div>
<span class="t" style="left:1121.5px;top:972px;width:30px;text-align:center;font-size:11px;color:#dddddd;font-weight:400;">13</span>
<div style="left:1156px;top:870px;width:10px;height:88px;background:#222"></div>
<div style="left:1169px;top:870px;width:4px;height:94px;background:#575757"></div>
<div style="left:1154px;top:891px;width:12px;height:16px;background:linear-gradient(#ececec 0,#e6e6e6 12%,#bababa 18%,#bdbdbd 50%,#cbcbcb 60%,#c6c6c6 100%);border-bottom:1px solid #111;box-shadow:0 1px 1px rgba(0,0,0,.6)"></div>
<div style="left:1154px;top:899px;width:12px;height:1px;background:#c03030"></div>
<div style="left:1155px;top:970px;width:23px;height:13px;background:#2c2c2c;border:2px solid #777"></div>
<span class="t" style="left:1151.5px;top:972px;width:30px;text-align:center;font-size:11px;color:#dddddd;font-weight:400;">14</span>
<div style="left:1186px;top:870px;width:10px;height:88px;background:#222"></div>
<div style="left:1199px;top:870px;width:4px;height:94px;background:#575757"></div>
<div style="left:1184px;top:939px;width:12px;height:16px;background:linear-gradient(#ececec 0,#e6e6e6 12%,#bababa 18%,#bdbdbd 50%,#cbcbcb 60%,#c6c6c6 100%);border-bottom:1px solid #111;box-shadow:0 1px 1px rgba(0,0,0,.6)"></div>
<div style="left:1185px;top:970px;width:23px;height:13px;background:#2c2c2c;border:2px solid #777"></div>
<span class="t" style="left:1181.5px;top:972px;width:30px;text-align:center;font-size:11px;color:#dddddd;font-weight:400;">15</span>
<div style="left:1216px;top:870px;width:10px;height:88px;background:#222"></div>
<div style="left:1229px;top:870px;width:4px;height:94px;background:#575757"></div>
<div style="left:1214px;top:939px;width:12px;height:16px;background:linear-gradient(#ececec 0,#e6e6e6 12%,#bababa 18%,#bdbdbd 50%,#cbcbcb 60%,#c6c6c6 100%);border-bottom:1px solid #111;box-shadow:0 1px 1px rgba(0,0,0,.6)"></div>
<div style="left:1215px;top:970px;width:23px;height:13px;background:#2c2c2c;border:2px solid #777"></div>
<span class="t" style="left:1211.5px;top:972px;width:30px;text-align:center;font-size:11px;color:#dddddd;font-weight:400;">16</span>
<div style="left:530px;top:885px;width:24px;height:24px;border-radius:50%;background:#333;border:1px solid #393939"></div>
<div style="left:530px;top:925px;width:25px;height:25px;border-radius:50%;background:#464646;border:2px solid #6c6c6c"></div>
<svg style="left:530px;top:925px" width="25" height="25" viewBox="0 0 25 25"><path d="M9 6 L19 12.5 L9 19 Z" fill="#8a8a8a"/></svg>
<div style="left:725px;top:885px;width:24px;height:24px;border-radius:50%;background:#333;border:1px solid #393939"></div>
<div style="left:725px;top:925px;width:25px;height:25px;border-radius:50%;background:#464646;border:2px solid #6c6c6c"></div>
<svg style="left:725px;top:925px" width="25" height="25" viewBox="0 0 25 25"><path d="M9 6 L19 12.5 L9 19 Z" fill="#8a8a8a"/></svg>
<div style="left:0px;top:998px;width:1281px;height:2px;background:#dfe6ee"></div>
</body></html>
